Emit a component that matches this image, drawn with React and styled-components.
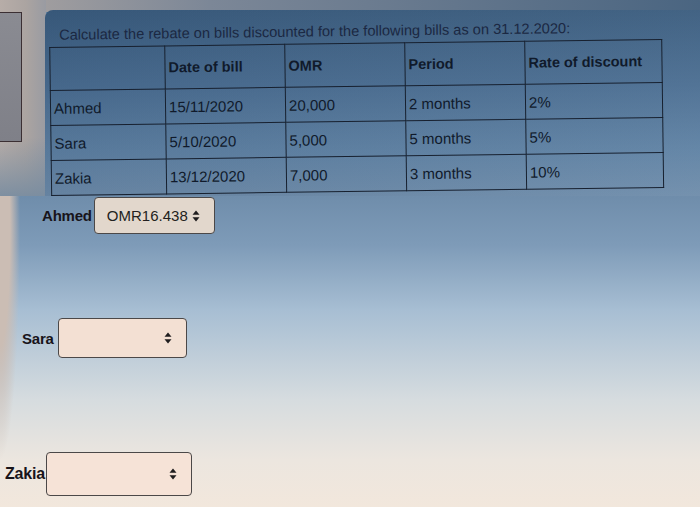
import React from 'react';
import styled, { createGlobalStyle } from 'styled-components';

const GlobalStyle = createGlobalStyle`
  html, body { margin: 0; padding: 0; }
  body {
    width: 700px;
    height: 507px;
    overflow: hidden;
    font-family: "Liberation Sans", Arial, sans-serif;
  }
`;

const Screen = styled.div`
  width: 700px;
  height: 507px;
  overflow: hidden;
  display: flex;
  flex-direction: column;
  background:
    radial-gradient(ellipse 20px 230px at 0 230px, #cbbdb4 50%, rgba(203, 189, 180, 0) 100%),
    linear-gradient(180deg, #6f8dab 0, #6f8dab 196px, #7e9bb8 245px, #a7bed3 310px, #d6dcdf 400px, #ece6df 460px, #f2e7dc 507px);
`;

const TopRow = styled.div`
  display: flex;
  align-items: flex-start;
  height: 196px;
  padding-top: 10px;
  box-sizing: border-box;
  background:
    linear-gradient(180deg, rgba(111, 141, 171, 0) 70%, rgba(120, 140, 160, 0.9) 100%) 0 0 / 46px 100% no-repeat,
    linear-gradient(90deg, #b7ada8 0, #aba4a1 26px, #999ba2 46px) 0 0 / 46px 100% no-repeat,
    linear-gradient(90deg, #a9a3a1 0, #7c8797 30%, #4a6581 100%) 0 0 / 100% 12px no-repeat;
`;

const SideFrame = styled.div`
  width: 21px;
  height: 128px;
  margin-top: 2px;
  flex: none;
  background: linear-gradient(180deg, #8a8b92, #7f8088);
  border: 1px solid #3b2f33;
  border-left: none;
`;

const Panel = styled.div`
  flex: 1;
  height: 100%;
  margin-left: 23px;
  border-top-left-radius: 8px;
  background:
    linear-gradient(90deg, rgba(20, 40, 70, 0.1), rgba(255, 255, 255, 0.04)),
    linear-gradient(180deg, #3b5d7f 0%, #4b6e92 40%, #5f82a4 75%, #6f8dab 100%);
  padding: 13px 0 0 5px;
  box-sizing: border-box;
  overflow: hidden;
`;

const Sheet = styled.div`
  transform: rotate(-0.75deg);
  transform-origin: 300px 80px;
`;

const Heading = styled.p`
  margin: 0 0 3px 10px;
  font-size: 14.6px;
  line-height: 17px;
  color: #1b2842;
`;

const Grid = styled.table`
  border-collapse: collapse;
  table-layout: fixed;
  width: 612px;
  color: #101a2b;
`;

const Head = styled.th`
  height: 42px;
  padding: 0 3px;
  border: 1px solid #17202f;
  text-align: left;
  font-size: 14.5px;
  font-weight: 700;
  white-space: nowrap;
`;

const Cell = styled.td`
  height: 34px;
  padding: 0 3px;
  border: 1px solid #17202f;
  font-size: 15px;
  white-space: nowrap;
`;

const Answers = styled.div`
  display: flex;
  flex-direction: column;
  padding-top: 1px;
`;

const AnswerRow = styled.div`
  display: flex;
  align-items: center;
  gap: ${p => p.$gap}px;
  margin-left: ${p => p.$left}px;
  margin-top: ${p => p.$top}px;
`;

const Label = styled.span`
  font-size: ${p => p.$size}px;
  font-weight: 700;
  color: #18141a;
  letter-spacing: -0.2px;
`;

const SelectBox = styled.div`
  width: ${p => p.$w}px;
  height: ${p => p.$h}px;
  box-sizing: border-box;
  display: flex;
  align-items: center;
  justify-content: space-between;
  padding: 0 14px 0 12px;
  background: ${p => p.$tint};
  border: 1.5px solid #4b4848;
  border-radius: 4px;
  font-size: 15px;
  color: #231f20;
`;

const Arrows = () => (
  <svg width="8" height="12" viewBox="0 0 8 12">
    <path d="M4 0.5 L7.5 4.8 H0.5 Z" fill="#1f1d1e" />
    <path d="M4 11.5 L7.5 7.2 H0.5 Z" fill="#1f1d1e" />
  </svg>
);

const rows = [
  { name: 'Ahmed', date: '15/11/2020', omr: '20,000', period: '2 months', rate: '2%' },
  { name: 'Sara', date: '5/10/2020', omr: '5,000', period: '5 months', rate: '5%' },
  { name: 'Zakia', date: '13/12/2020', omr: '7,000', period: '3 months', rate: '10%' },
];

const answers = [
  { name: 'Ahmed', value: 'OMR16.438', left: 42, top: 0, gap: 2, w: 121, h: 37, size: 15, tint: '#e2d7cc' },
  { name: 'Sara', value: '', left: 22, top: 84, gap: 4, w: 129, h: 40, size: 15, tint: '#f3e0d3' },
  { name: 'Zakia', value: '', left: 5, top: 94, gap: 1, w: 146, h: 44, size: 16, tint: '#f6e3d7' },
];

export default function App() {
  return (
    <Screen>
      <GlobalStyle />
      <TopRow>
        <SideFrame />
        <Panel>
          <Sheet>
            <Heading>
              Calculate the rebate on bills discounted for the following bills as on 31.12.2020:
            </Heading>
            <Grid>
              <colgroup>
                <col style={{ width: 115 }} />
                <col style={{ width: 120 }} />
                <col style={{ width: 120 }} />
                <col style={{ width: 120 }} />
                <col style={{ width: 137 }} />
              </colgroup>
              <thead>
                <tr>
                  <Head></Head>
                  <Head>Date of bill</Head>
                  <Head>OMR</Head>
                  <Head>Period</Head>
                  <Head>Rate of discount</Head>
                </tr>
              </thead>
              <tbody>
                {rows.map(r => (
                  <tr key={r.name}>
                    <Cell>{r.name}</Cell>
                    <Cell>{r.date}</Cell>
                    <Cell>{r.omr}</Cell>
                    <Cell>{r.period}</Cell>
                    <Cell>{r.rate}</Cell>
                  </tr>
                ))}
              </tbody>
            </Grid>
          </Sheet>
        </Panel>
      </TopRow>
      <Answers>
        {answers.map(a => (
          <AnswerRow key={a.name} $left={a.left} $top={a.top} $gap={a.gap}>
            <Label $size={a.size}>{a.name}</Label>
            <SelectBox $w={a.w} $h={a.h} $tint={a.tint}>
              <span>{a.value}</span>
              <Arrows />
            </SelectBox>
          </AnswerRow>
        ))}
      </Answers>
    </Screen>
  );
}
